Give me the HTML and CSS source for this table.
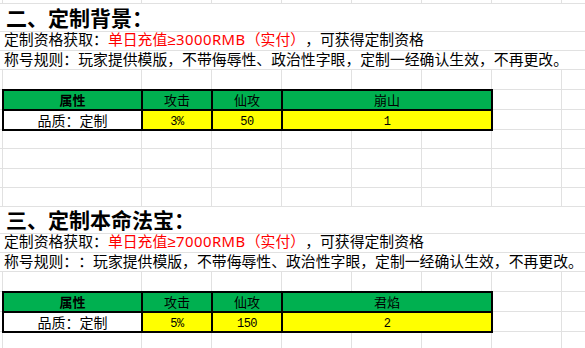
FILE: index.html
```html
<!DOCTYPE html>
<html lang="zh-CN">
<head>
<meta charset="utf-8">
<title>定制</title>
<link rel="stylesheet" href="styles.css">
</head>
<body>
<div class="sheet">
  <div class="row row-top"></div>
  <div class="row row-title"><h2 class="title">二、定制背景：</h2></div>
  <div class="row row-text"><p class="line">定制资格获取：<span class="red">单日充值<span class="latin">≥3000RMB</span>（实付）</span>，可获得定制资格</p></div>
  <div class="row row-text"><p class="line">称号规则：玩家提供模版，不带侮辱性、政治性字眼，定制一经确认生效，不再更改。</p></div>
  <div class="row row-pre"></div>
  <div class="band">
    <div class="attr-table">
      <div class="cell head bold">属性</div>
      <div class="cell head">攻击</div>
      <div class="cell head">仙攻</div>
      <div class="cell head">崩山</div>
      <div class="cell label">品质：定制</div>
      <div class="cell num">3%</div>
      <div class="cell num">50</div>
      <div class="cell num">1</div>
    </div>
  </div>
  <div class="row h18"></div>
  <div class="row h20"></div>
  <div class="row h19"></div>
  <div class="row h19"></div>
  <div class="row row-title second"><h2 class="title">三、定制本命法宝：</h2></div>
  <div class="row row-text"><p class="line">定制资格获取：<span class="red">单日充值<span class="latin">≥7000RMB</span>（实付）</span>，可获得定制资格</p></div>
  <div class="row row-text"><p class="line">称号规则：：玩家提供模版，不带侮辱性、政治性字眼，定制一经确认生效，不再更改。</p></div>
  <div class="row row-pre"></div>
  <div class="band">
    <div class="attr-table">
      <div class="cell head bold">属性</div>
      <div class="cell head">攻击</div>
      <div class="cell head">仙攻</div>
      <div class="cell head">君焰</div>
      <div class="cell label">品质：定制</div>
      <div class="cell num">5%</div>
      <div class="cell num">150</div>
      <div class="cell num">2</div>
    </div>
  </div>
  <div class="row h20"></div>
</div>
</body>
</html>
```

FILE: styles.css
```css
html, body {
  margin: 0;
  padding: 0;
  background: #fff;
}

body {
  font-family: "Noto Sans CJK SC", "Noto Sans", sans-serif;
  color: #000;
  text-spacing-trim: space-all;
}

.sheet {
  width: 585px;
  height: 348px;
  overflow: hidden;
  display: flex;
  flex-direction: column;
  background-color: #fff;
  background-image: linear-gradient(to right,
    transparent 2px, #e1e1e1 2px 3px, transparent 3px 141px,
    #e1e1e1 141px 142px, transparent 142px 211px,
    #e1e1e1 211px 212px, transparent 212px 281px,
    #e1e1e1 281px 282px, transparent 282px 351px,
    #e1e1e1 351px 352px, transparent 352px 421px,
    #e1e1e1 421px 422px, transparent 422px 491px,
    #e1e1e1 491px 492px, transparent 492px 561px,
    #e1e1e1 561px 562px, transparent 562px);
}

.row {
  box-sizing: border-box;
  flex: none;
  border-bottom: 1px solid #e1e1e1;
}

.row-top { height: 4px; }
.h18 { height: 18px; }
.h19 { height: 19px; }
.h20 { height: 20px; }

.row-pre {
  height: 19px;
  border-bottom: none;
}

.row-title {
  height: 28px;
  background: #fff;
  display: flex;
  align-items: flex-end;
}
.row-title.second { height: 27px; }

.row-text {
  height: 19px;
  background: #fff;
  display: flex;
  align-items: flex-end;
}

.title {
  margin: 0;
  padding: 0 0 3px 6px;
  font-size: 21px;
  line-height: 21px;
  font-weight: 700;
  white-space: nowrap;
}

.line {
  margin: 0;
  padding: 0 0 3px 4px;
  font-size: 14.85px;
  line-height: 15px;
  white-space: nowrap;
}

.red { color: #ff0000; }

.latin {
  font-family: "Noto Sans", sans-serif;
  letter-spacing: 0.5px;
}

.band {
  flex: none;
  height: 42px;
  background-image: linear-gradient(to bottom,
    #e1e1e1 0 1px, transparent 1px 20px,
    #e1e1e1 20px 21px, transparent 21px 40px,
    #e1e1e1 40px 41px, transparent 41px);
}

.attr-table {
  margin-left: 2px;
  width: 491px;
  box-sizing: border-box;
  display: grid;
  grid-template-columns: 137px 68px 68px 208px;
  grid-template-rows: 18px 18px;
  gap: 2px;
  padding: 2px;
  background: #000;
}

.cell {
  display: flex;
  align-items: flex-end;
  justify-content: center;
  white-space: nowrap;
  background: #ffff00;
}

.head {
  background: #00b050;
  font-size: 13px;
  line-height: 16px;
  padding-bottom: 1px;
}

.bold { font-weight: 700; }

.label {
  background: #fff;
  font-size: 14px;
  line-height: 16px;
  padding-bottom: 1px;
}

.num {
  font-family: "Liberation Mono", monospace;
  font-size: 12px;
  line-height: 14px;
  letter-spacing: -0.5px;
}
```
